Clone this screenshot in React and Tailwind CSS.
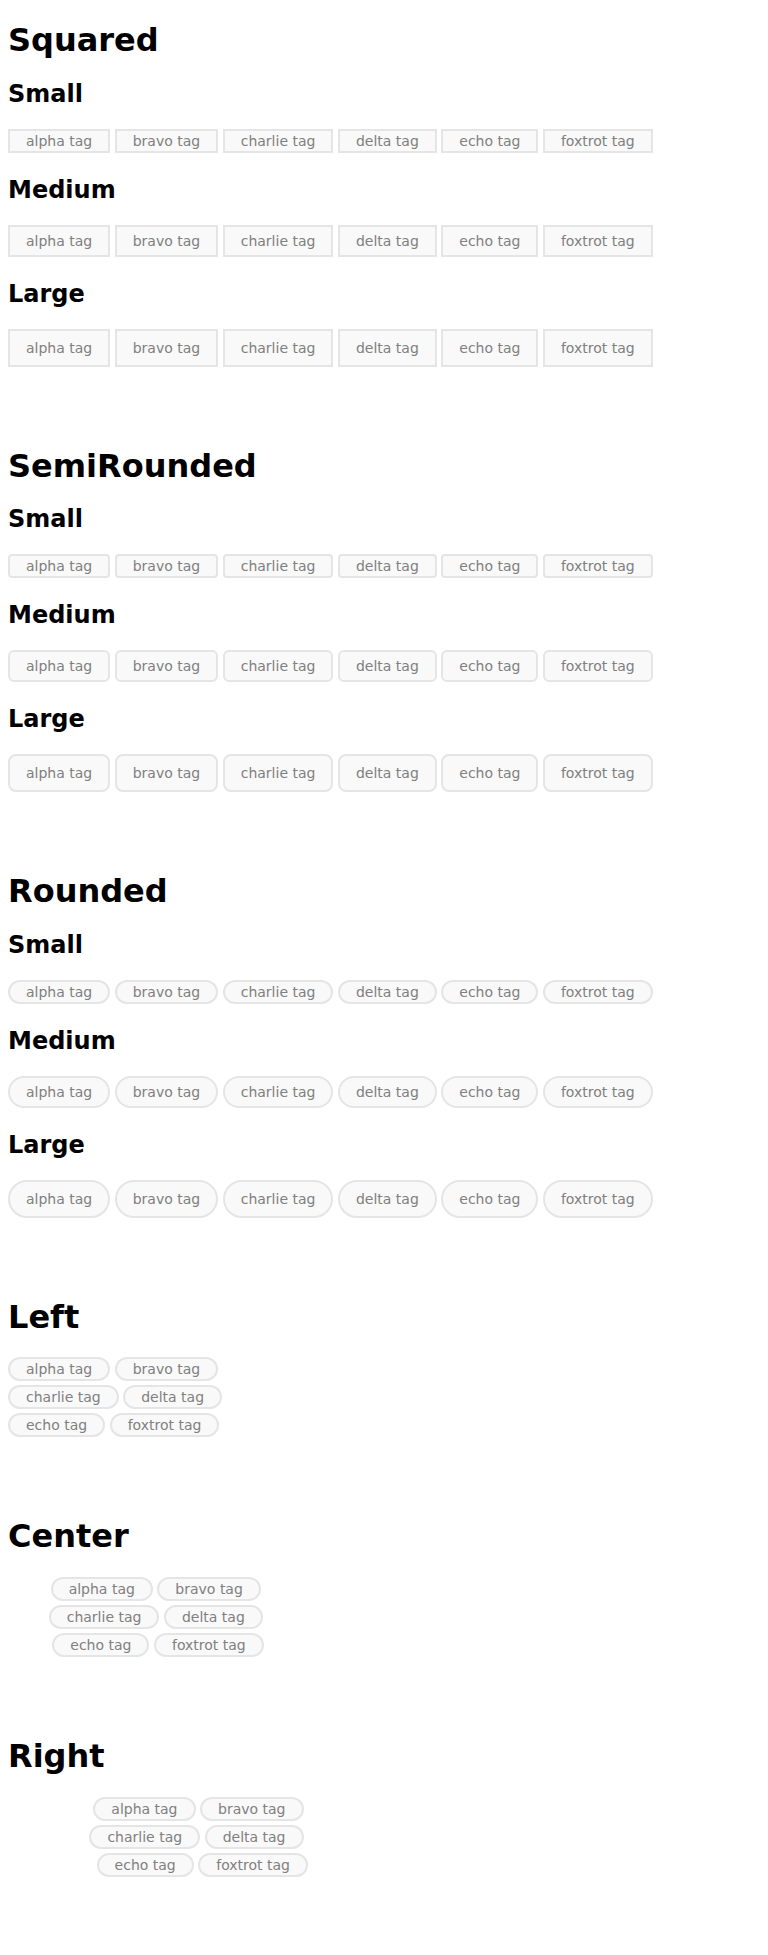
const tags = ["alpha tag", "bravo tag", "charlie tag", "delta tag", "echo tag", "foxtrot tag"];

const sizeClass = {
  small: "py-[2px]",
  medium: "py-[6px]",
  large: "py-[9px]",
};

const shapeClass = {
  squared: { small: "rounded-none", medium: "rounded-none", large: "rounded-none" },
  semi: { small: "rounded-[4px]", medium: "rounded-[6px]", large: "rounded-[8px]" },
  rounded: { small: "rounded-full", medium: "rounded-full", large: "rounded-full" },
};

const alignClass = {
  left: "justify-start",
  center: "justify-center",
  right: "justify-end",
};

const Tag = ({ label, size, shape }) => (
  <span
    className={`mb-1 mr-[4.5px] last:mr-0 inline-block border-2 border-[#e5e5e5] bg-[#f9f9f9] px-4 text-[14px] leading-[16px] text-[#808080] ${sizeClass[size]} ${shapeClass[shape][size]}`}
  >
    {label}
  </span>
);

const TagList = ({ size = "small", shape = "rounded", align = "left", width = "" }) => (
  <div className={`mb-5 flex flex-wrap ${alignClass[align]} ${width}`}>
    {tags.map((t) => (
      <Tag key={t} label={t} size={size} shape={shape} />
    ))}
  </div>
);

const ShapeSection = ({ title, shape }) => (
  <section className="pb-[57px]">
    <h1 className="mb-[21.44px] text-[32px] font-bold leading-[37.25px]">{title}</h1>
    <h2 className="mb-5 text-[24px] font-bold leading-[27.94px]">Small</h2>
    <TagList size="small" shape={shape} />
    <h2 className="mb-5 text-[24px] font-bold leading-[27.94px]">Medium</h2>
    <TagList size="medium" shape={shape} />
    <h2 className="mb-5 text-[24px] font-bold leading-[27.94px]">Large</h2>
    <TagList size="large" shape={shape} />
  </section>
);

const AlignSection = ({ title, align }) => (
  <section className="pb-[57px]">
    <h1 className="mb-[21.44px] text-[32px] font-bold leading-[37.25px]">{title}</h1>
    <TagList size="small" shape="rounded" align={align} width="w-[300px]" />
  </section>
);

export default function App() {
  return (
    <div className="min-h-[1955px] bg-white px-2 pt-[22px] text-black [font-family:'DejaVu_Sans',sans-serif]">
      <ShapeSection title="Squared" shape="squared" />
      <ShapeSection title="SemiRounded" shape="semi" />
      <ShapeSection title="Rounded" shape="rounded" />
      <AlignSection title="Left" align="left" />
      <AlignSection title="Center" align="center" />
      <AlignSection title="Right" align="right" />
    </div>
  );
}
